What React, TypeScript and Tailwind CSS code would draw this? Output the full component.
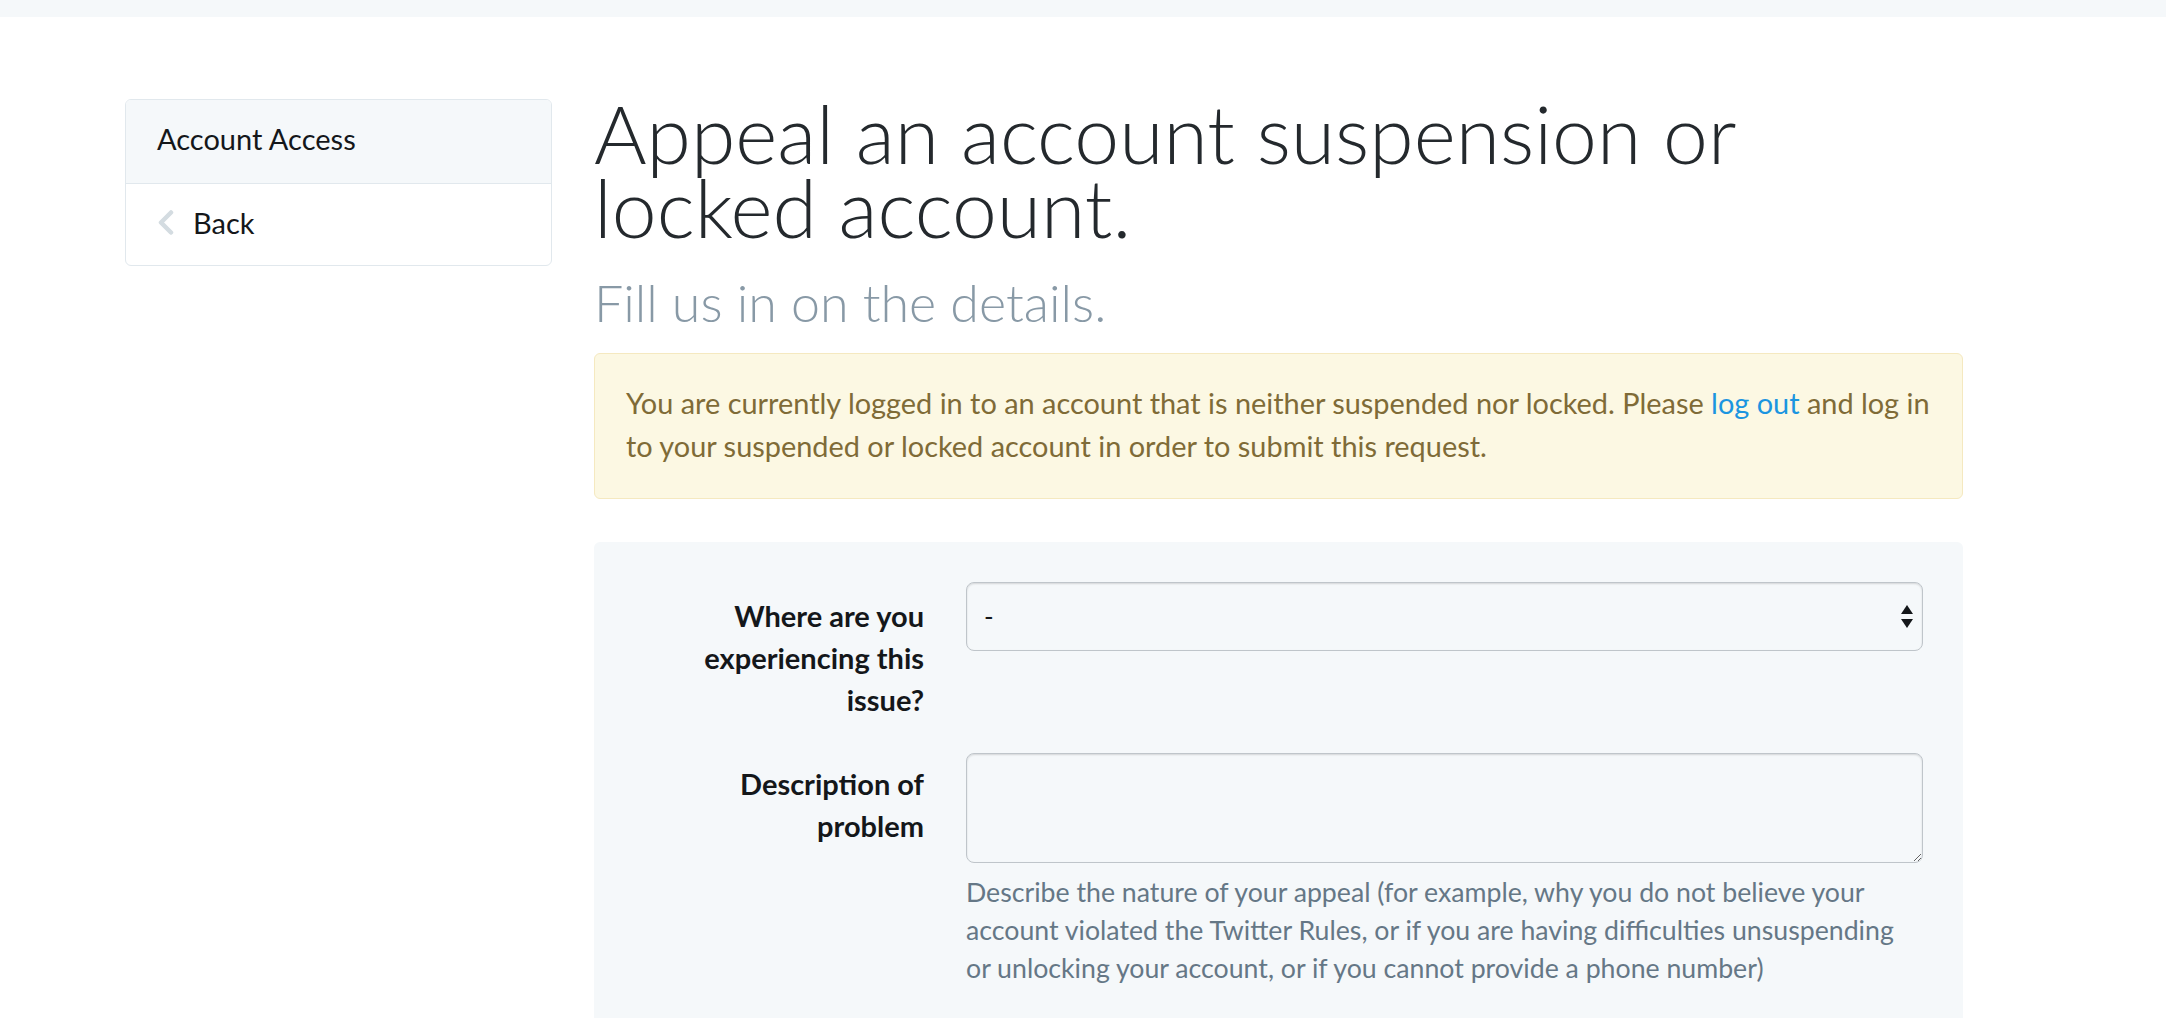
function ChevronLeft() {
  return (
    <svg width="17" height="25" viewBox="0 0 17 25" fill="none" aria-hidden="true">
      <polyline points="14,2.5 4,12.5 14,22.5" stroke="#d4dce1" strokeWidth="4.5" strokeLinecap="round" strokeLinejoin="round" />
    </svg>
  );
}

function SelectArrows() {
  return (
    <svg width="12" height="23" viewBox="0 0 12 23" aria-hidden="true">
      <polygon points="6,0 12,9 0,9" fill="#14171a" />
      <polygon points="0,14 12,14 6,23" fill="#14171a" />
    </svg>
  );
}

function Sidebar() {
  return (
    <nav className="mt-[3px] w-[427px] shrink-0 overflow-hidden rounded-[6px] border border-[#e1e8ed] text-[29px] leading-[35px] text-[#14171a]">
      <div className="border-b border-[#e1e8ed] bg-[#f5f8fa] pt-[21px] pb-[27px] pl-[31px]">Account Access</div>
      <a href="#" className="flex items-center gap-[19px] pt-[21px] pb-[25px] pl-[31px]">
        <ChevronLeft />
        <span>Back</span>
      </a>
    </nav>
  );
}

export default function App() {
  return (
    <div className="min-h-screen bg-white" style={{ fontFamily: "Lato, 'Open Sans', sans-serif" }}>
      <div className="h-[17px] bg-[#f5f8fa]" />
      <div className="flex items-start gap-[42px] pt-[79px] pl-[125px]">
        <Sidebar />
        <main className="w-[1369px] shrink-0">
          <h1 className="text-[80.5px] font-light leading-[74px] text-[#24292d]">
            Appeal an account suspension or locked account.
          </h1>
          <h2 className="mt-[28px] text-[52px] font-light leading-[60px] text-[#8899a6]">Fill us in on the details.</h2>

          <div className="mt-[21px] rounded-[6px] border border-[#f5e9c0] bg-[#fcf8e3] pt-[27px] pr-[20px] pb-[31px] pl-[31px] text-[28.9px] leading-[43px] text-[#7f6b37]">
            You are currently logged in to an account that is neither suspended nor locked. Please{" "}
            <a href="#" className="text-[#1b95e0]">log out</a> and log in to your suspended or locked account in order to
            submit this request.
          </div>

          <form className="mt-[43px] rounded-[6px] bg-[#f5f8fa] px-[40px] pt-[40px] pb-[60px]">
            <div className="flex items-start gap-[42px]">
              <label className="w-[290px] shrink-0 pt-[13px] text-right text-[29px] font-bold leading-[42px] text-[#14171a]">
                Where are you
                <br />
                experiencing this
                <br />
                issue?
              </label>
              <div className="relative flex-1">
                <select className="h-[69px] w-full appearance-none rounded-[8px] border border-[#bfc5ca] bg-[#f5f8fa] pl-[17px] text-[26px] text-[#14171a] shadow-[inset_0_1px_2px_rgba(0,0,0,0.14)]">
                  <option>-</option>
                </select>
                <div className="pointer-events-none absolute top-[23px] right-[10px]">
                  <SelectArrows />
                </div>
              </div>
            </div>

            <div className="mt-[32px] flex items-start gap-[42px]">
              <label className="w-[290px] shrink-0 pt-[10px] text-right text-[29px] font-bold leading-[42px] text-[#14171a]">
                Description of
                <br />
                problem
              </label>
              <div className="flex-1">
                <textarea className="block h-[110px] w-full rounded-[8px] border border-[#bfc5ca] bg-[#f5f8fa] p-[14px] text-[26px] text-[#14171a] shadow-[inset_0_1px_2px_rgba(0,0,0,0.14)]" />
                <p className="mt-[10px] max-w-[940px] text-[26.7px] leading-[38px] text-[#657786]">
                  Describe the nature of your appeal (for example, why you do not believe your account violated the Twitter
                  Rules, or if you are having difficulties unsuspending or unlocking your account, or if you cannot provide a
                  phone number)
                </p>
              </div>
            </div>
          </form>
        </main>
      </div>
    </div>
  );
}
